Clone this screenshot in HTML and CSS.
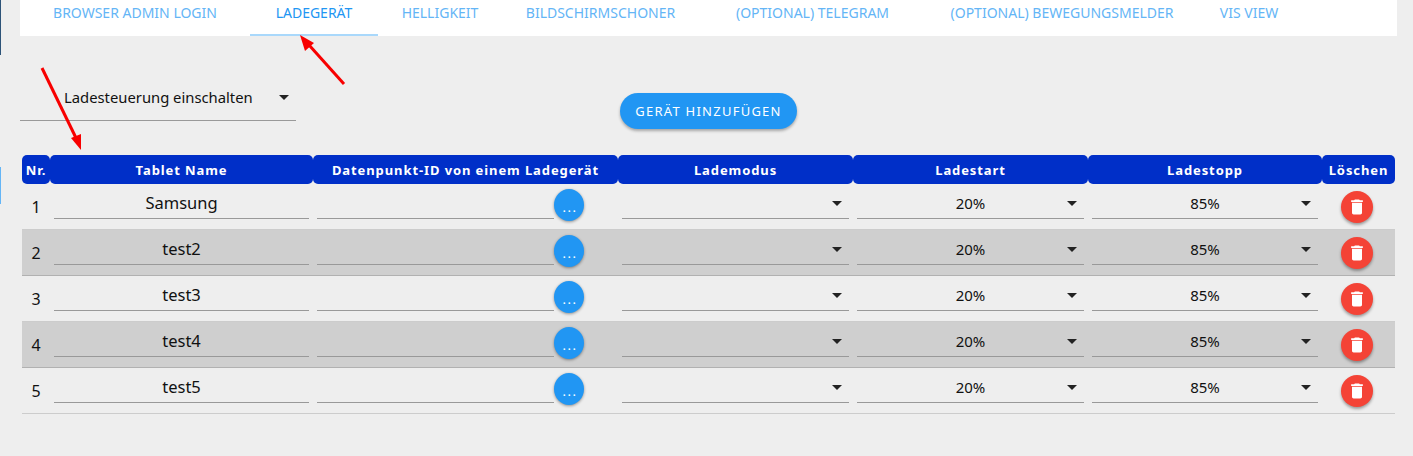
FILE: index.html
```html
<!DOCTYPE html>
<html>
  <head>
    <meta charset="UTF-8">
    <title>Ladegerät</title>
    <link rel="stylesheet" href="styles.css">
  </head>
  <body>

  <div class="sidebar">
    <div class="side-dark"></div>
    <div class="side-active"></div>
  </div>

  <div class="main">
    <div class="tabs">
      <div class="tab">Browser Admin Login</div>
      <div class="tab active">Ladegerät</div>
      <div class="tab">Helligkeit</div>
      <div class="tab">Bildschirmschoner</div>
      <div class="tab">(Optional) Telegram</div>
      <div class="tab">(Optional) Bewegungsmelder</div>
      <div class="tab">Vis View</div>
    </div>

    <div class="toolbar">
      <div class="main-select">
        <span>Ladesteuerung einschalten</span>
        <i class="caret"></i>
      </div>
      <button class="add-btn">Gerät hinzufügen</button>
    </div>

    <table class="devices">
      <colgroup>
        <col class="c-nr"><col class="c-name"><col class="c-id"><col class="c-mode"><col class="c-start"><col class="c-stop"><col class="c-del">
      </colgroup>
      <thead>
        <tr>
          <th>Nr.</th>
          <th>Tablet Name</th>
          <th>Datenpunkt-ID von einem Ladegerät</th>
          <th>Lademodus</th>
          <th>Ladestart</th>
          <th>Ladestopp</th>
          <th>Löschen</th>
        </tr>
      </thead>
      <tbody>
        <tr>
          <td class="nr">1</td>
          <td><div class="field name">Samsung</div></td>
          <td><div class="id-cell"><div class="field"></div><button class="dots">...</button></div></td>
          <td><div class="field pick"><i class="caret"></i></div></td>
          <td><div class="field pick"><span>20%</span><i class="caret"></i></div></td>
          <td><div class="field pick"><span>85%</span><i class="caret"></i></div></td>
          <td><button class="del"><svg viewBox="0 0 24 24"><path d="M6 19c0 1.1.9 2 2 2h8c1.1 0 2-.9 2-2V7H6v12zM19 4h-3.5l-1-1h-5l-1 1H5v2h14V4z"/></svg></button></td>
        </tr>
        <tr>
          <td class="nr">2</td>
          <td><div class="field name">test2</div></td>
          <td><div class="id-cell"><div class="field"></div><button class="dots">...</button></div></td>
          <td><div class="field pick"><i class="caret"></i></div></td>
          <td><div class="field pick"><span>20%</span><i class="caret"></i></div></td>
          <td><div class="field pick"><span>85%</span><i class="caret"></i></div></td>
          <td><button class="del"><svg viewBox="0 0 24 24"><path d="M6 19c0 1.1.9 2 2 2h8c1.1 0 2-.9 2-2V7H6v12zM19 4h-3.5l-1-1h-5l-1 1H5v2h14V4z"/></svg></button></td>
        </tr>
        <tr>
          <td class="nr">3</td>
          <td><div class="field name">test3</div></td>
          <td><div class="id-cell"><div class="field"></div><button class="dots">...</button></div></td>
          <td><div class="field pick"><i class="caret"></i></div></td>
          <td><div class="field pick"><span>20%</span><i class="caret"></i></div></td>
          <td><div class="field pick"><span>85%</span><i class="caret"></i></div></td>
          <td><button class="del"><svg viewBox="0 0 24 24"><path d="M6 19c0 1.1.9 2 2 2h8c1.1 0 2-.9 2-2V7H6v12zM19 4h-3.5l-1-1h-5l-1 1H5v2h14V4z"/></svg></button></td>
        </tr>
        <tr>
          <td class="nr">4</td>
          <td><div class="field name">test4</div></td>
          <td><div class="id-cell"><div class="field"></div><button class="dots">...</button></div></td>
          <td><div class="field pick"><i class="caret"></i></div></td>
          <td><div class="field pick"><span>20%</span><i class="caret"></i></div></td>
          <td><div class="field pick"><span>85%</span><i class="caret"></i></div></td>
          <td><button class="del"><svg viewBox="0 0 24 24"><path d="M6 19c0 1.1.9 2 2 2h8c1.1 0 2-.9 2-2V7H6v12zM19 4h-3.5l-1-1h-5l-1 1H5v2h14V4z"/></svg></button></td>
        </tr>
        <tr>
          <td class="nr">5</td>
          <td><div class="field name">test5</div></td>
          <td><div class="id-cell"><div class="field"></div><button class="dots">...</button></div></td>
          <td><div class="field pick"><i class="caret"></i></div></td>
          <td><div class="field pick"><span>20%</span><i class="caret"></i></div></td>
          <td><div class="field pick"><span>85%</span><i class="caret"></i></div></td>
          <td><button class="del"><svg viewBox="0 0 24 24"><path d="M6 19c0 1.1.9 2 2 2h8c1.1 0 2-.9 2-2V7H6v12zM19 4h-3.5l-1-1h-5l-1 1H5v2h14V4z"/></svg></button></td>
        </tr>
      </tbody>
    </table>
  </div>

  <!-- red annotation arrows drawn over the screenshot -->
  <svg class="arrows" viewBox="0 0 1413 456">
    <g stroke="#f80000" stroke-width="3" fill="none">
      <line x1="42" y1="68" x2="77" y2="140"/>
      <line x1="344" y1="84" x2="309" y2="45"/>
    </g>
    <g fill="#f80000">
      <polygon points="81,150 71,138 81,134"/>
      <polygon points="300,35 314,43 305,51"/>
    </g>
  </svg>

  </body>
</html>
```

FILE: styles.css
```css
html, body {
  margin: 0;
  height: 100%;
}

body {
  display: flex;
  overflow: hidden;
  background-color: #eeeeee;
  color: #111111;
  font-family: "Noto Sans", "Open Sans", sans-serif;
}

.sidebar {
  width: 1px;
  flex: none;
}

.side-dark {
  height: 55px;
  background-color: #2d5378;
}

.side-active {
  height: 37px;
  margin-top: 112px;
  background-color: #64b5f6;
}

.main {
  flex: 1;
  padding: 0 16px 0 19px;
}

/* tabs */

.tabs {
  display: grid;
  grid-template-columns: 230px 128px 124px 197px 227px 272px 102px;
  height: 36px;
  background-color: #ffffff;
}

.tab {
  height: 34px;
  line-height: 25px;
  font-size: 14px;
  color: #64b5f6;
  text-align: center;
  text-transform: uppercase;
  white-space: nowrap;
}

.tab.active {
  color: #2196f3;
  border-bottom: 2px solid #a9d8fb;
}

/* top controls */

.toolbar {
  display: flex;
  align-items: flex-start;
  padding-top: 39px;
  height: 119px;
  box-sizing: border-box;
}

.main-select {
  display: flex;
  align-items: center;
  justify-content: space-between;
  box-sizing: border-box;
  width: 276px;
  height: 46px;
  padding: 0 7px 0 44px;
  border-bottom: 1px solid #999999;
  font-size: 14.8px;
}

.main-select span {
  margin-bottom: 2px;
}

.add-btn {
  margin: 18px 0 0 324px;
  width: 177px;
  height: 36px;
  border: 0;
  border-radius: 18px;
  background-color: #2196f3;
  color: #ffffff;
  font-family: inherit;
  font-size: 13px;
  letter-spacing: 1.25px;
  text-transform: uppercase;
  box-shadow: 0 2px 3px rgba(0,0,0,.3);
}

.caret {
  flex: none;
  width: 0;
  height: 0;
  border-left: 5.5px solid transparent;
  border-right: 5.5px solid transparent;
  border-top: 5.5px solid #222222;
}

/* table */

.devices {
  width: 1373px;
  margin-left: 2px;
  border-collapse: separate;
  border-spacing: 0;
  table-layout: fixed;
}

.c-nr { width: 28px; }
.c-name { width: 263px; }
.c-id { width: 305px; }
.c-mode { width: 235px; }
.c-start { width: 235px; }
.c-stop { width: 234px; }
.c-del { width: 73px; }

.devices th {
  height: 29px;
  padding: 0;
  background-color: #002fc8;
  border-radius: 5px;
  color: #ffffff;
  font-size: 13px;
  letter-spacing: .9px;
  white-space: nowrap;
}

.devices td {
  box-sizing: border-box;
  height: 46px;
  padding: 0 4px;
  border-bottom: 1px solid rgba(0,0,0,.14);
  vertical-align: top;
}

.devices tbody tr:nth-child(even) td {
  background-color: #cfcfcf;
}

.devices td.nr {
  padding: 13px 0 0;
  text-align: center;
  font-size: 16px;
  line-height: 20px;
}

.field {
  box-sizing: border-box;
  height: 35px;
  border-bottom: 1px solid #999999;
}

.name {
  text-align: center;
  font-size: 16.5px;
  line-height: 37px;
}

.id-cell {
  display: flex;
  margin-right: 30px;
}

.id-cell .field {
  flex: 1;
}

.pick {
  position: relative;
  display: flex;
  align-items: center;
  justify-content: center;
  font-size: 15px;
  padding-top: 4px;
}

.pick .caret {
  position: absolute;
  right: 7px;
  top: 17px;
}

.dots {
  width: 30px;
  height: 32px;
  margin-top: 5px;
  padding: 4px 0 0 2px;
  border: 0;
  border-radius: 50%;
  background-color: #2196f3;
  color: #ffffff;
  font-family: inherit;
  font-size: 13px;
  letter-spacing: 1.5px;
  box-shadow: 0 1px 3px rgba(0,0,0,.4);
}

.del {
  display: block;
  width: 32px;
  height: 32px;
  margin: 7px 0 0 15px;
  padding: 6px;
  border: 0;
  border-radius: 50%;
  background-color: #f44336;
  box-shadow: 0 2px 3px rgba(0,0,0,.35);
}

.del svg {
  display: block;
  width: 20px;
  height: 20px;
  fill: #ffffff;
}

/* annotations lie over the page */

.arrows {
  position: absolute;
  left: 0;
  top: 0;
  width: 1413px;
  height: 456px;
  pointer-events: none;
}
```
